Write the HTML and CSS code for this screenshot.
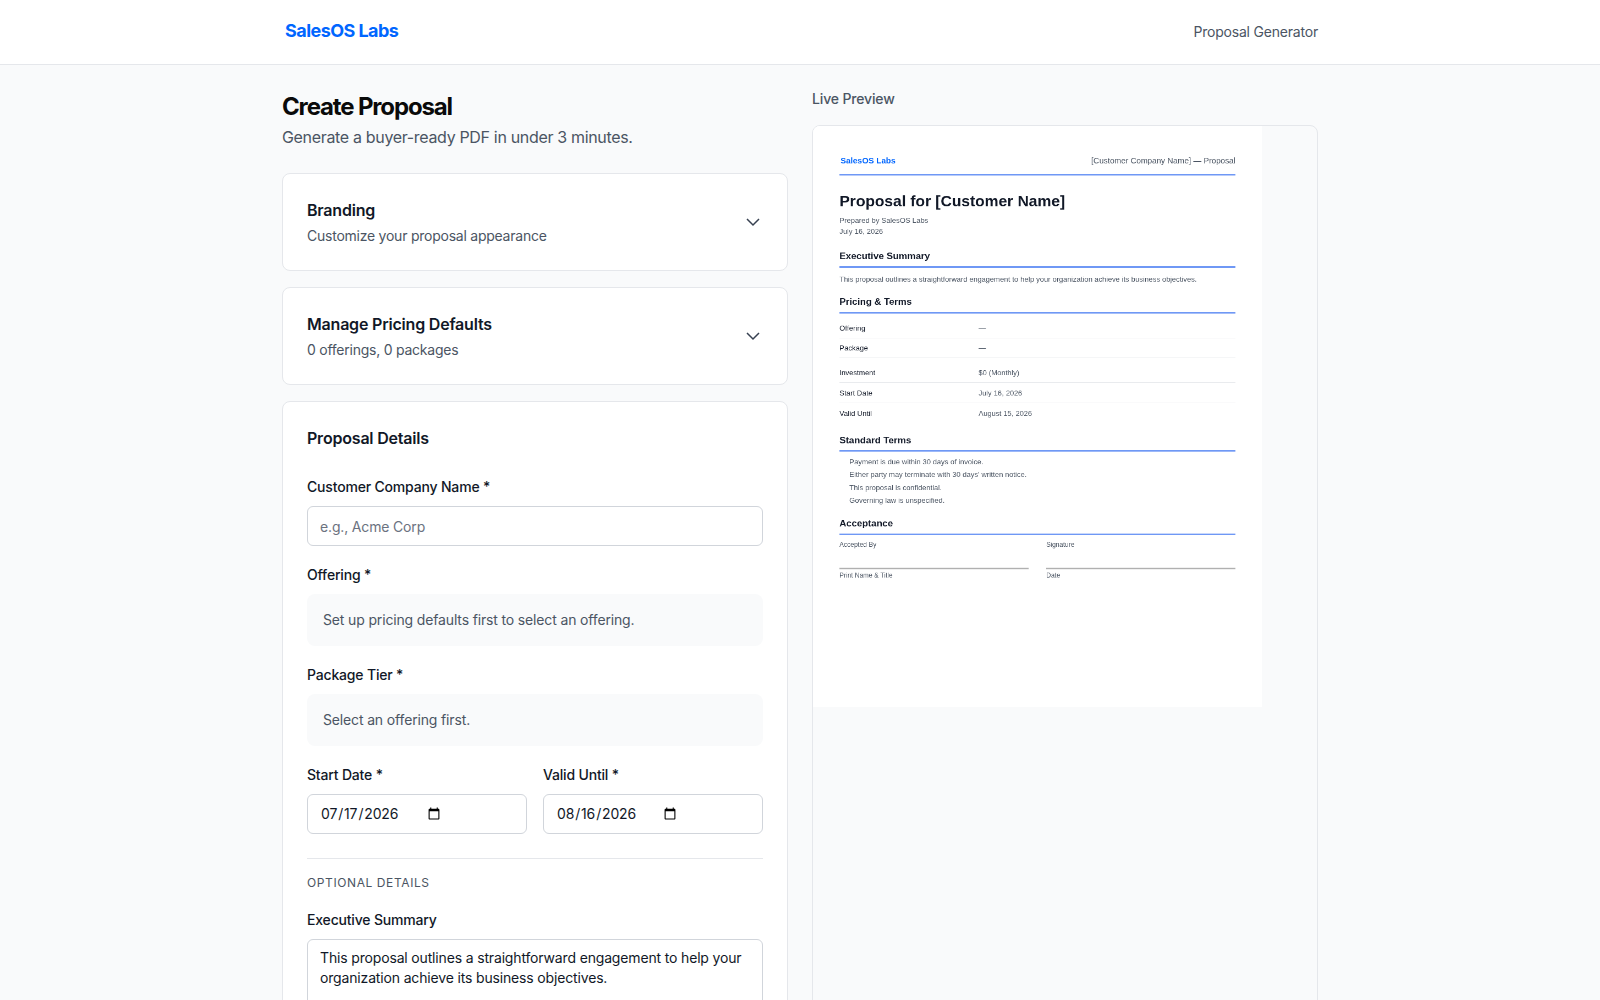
FILE: index.html
```html
<!DOCTYPE html>
<html>
<head>
    <title>Create Proposal - SalesOS Labs</title>
    <link rel="stylesheet" href="styles.css">
</head>
<body>
    <header class="topbar">
        <div class="topbar-inner">
            <span class="brand">SalesOS Labs</span>
            <span class="nav-link">Proposal Generator</span>
        </div>
    </header>

    <main class="layout">
        <section class="form-col">
            <h1 class="page-title">Create Proposal</h1>
            <p class="page-sub">Generate a buyer-ready PDF in under 3 minutes.</p>

            <div class="card collapse-card">
                <div>
                    <div class="card-title">Branding</div>
                    <div class="card-sub">Customize your proposal appearance</div>
                </div>
                <svg class="chevron" width="24" height="24" viewBox="0 0 24 24"><path d="m6 9 6 6 6-6"/></svg>
            </div>

            <div class="card collapse-card">
                <div>
                    <div class="card-title">Manage Pricing Defaults</div>
                    <div class="card-sub">0 offerings, 0 packages</div>
                </div>
                <svg class="chevron" width="24" height="24" viewBox="0 0 24 24"><path d="m6 9 6 6 6-6"/></svg>
            </div>

            <div class="card details-card">
                <h2 class="card-title details-title">Proposal Details</h2>

                <div class="field">
                    <label class="field-label">Customer Company Name *</label>
                    <input class="input" type="text" placeholder="e.g., Acme Corp">
                </div>
                <div class="field">
                    <label class="field-label">Offering *</label>
                    <div class="notice">Set up pricing defaults first to select an offering.</div>
                </div>
                <div class="field">
                    <label class="field-label">Package Tier *</label>
                    <div class="notice">Select an offering first.</div>
                </div>
                <div class="field-row">
                    <div>
                        <label class="field-label">Start Date *</label>
                        <input class="input date-input" type="date" value="2026-07-17">
                    </div>
                    <div>
                        <label class="field-label">Valid Until *</label>
                        <input class="input date-input" type="date" value="2026-08-16">
                    </div>
                </div>

                <div class="optional-head">Optional Details</div>
                <div class="field">
                    <label class="field-label">Executive Summary</label>
                    <textarea class="input summary" rows="4">This proposal outlines a straightforward engagement to help your organization achieve its business objectives.</textarea>
                </div>
            </div>
        </section>

        <section class="preview-col">
            <div class="preview-label">Live Preview</div>
            <div class="preview-panel">
                <div class="sheet-frame">
                    <div class="sheet">
                        <div class="sheet-head">
                            <span class="sheet-brand">SalesOS Labs</span>
                            <span class="sheet-ref">[Customer Company Name] — Proposal</span>
                        </div>
                        <h1 class="sheet-title">Proposal for [Customer Name]</h1>
                        <div class="sheet-meta">Prepared by SalesOS Labs</div>
                        <div class="sheet-meta last-meta">July 16, 2026</div>

                        <h2 class="sheet-h2">Executive Summary</h2>
                        <p class="sheet-text">This proposal outlines a straightforward engagement to help your organization achieve its business objectives.</p>

                        <h2 class="sheet-h2">Pricing &amp; Terms</h2>
                        <table class="sheet-table">
                            <tr><th>Offering</th><td>—</td></tr>
                            <tr><th>Package</th><td>—</td></tr>
                        </table>
                        <table class="sheet-table second">
                            <tr><th>Investment</th><td>$0 (Monthly)</td></tr>
                            <tr><th>Start Date</th><td>July 16, 2026</td></tr>
                            <tr class="last"><th>Valid Until</th><td>August 15, 2026</td></tr>
                        </table>

                        <h2 class="sheet-h2 terms-head">Standard Terms</h2>
                        <ul class="sheet-terms">
                            <li>Payment is due within 30 days of invoice.</li>
                            <li>Either party may terminate with 30 days' written notice.</li>
                            <li>This proposal is confidential.</li>
                            <li>Governing law is unspecified.</li>
                        </ul>

                        <h2 class="sheet-h2">Acceptance</h2>
                        <div class="sign-grid">
                            <div>
                                <div class="sign-label">Accepted By</div>
                                <div class="sign-line"></div>
                                <div class="sign-label">Print Name &amp; Title</div>
                            </div>
                            <div>
                                <div class="sign-label">Signature</div>
                                <div class="sign-line"></div>
                                <div class="sign-label">Date</div>
                            </div>
                        </div>
                    </div>
                </div>
            </div>
        </section>
    </main>
</body>
</html>
```

FILE: styles.css
```css
* { box-sizing: border-box; }
body { margin: 0; background: #f9fafb; color: #111827; font-family: Inter, sans-serif; font-size: 16px; }

.topbar { background: white; border-bottom: 1px solid #e5e7eb; height: 65px; }
.topbar-inner { max-width: 1100px; margin: 0 auto; padding: 0 32px 2px 35px; height: 64px; display: flex; justify-content: space-between; align-items: center; }
.brand { font-size: 18px; font-weight: 700; letter-spacing: -0.55px; color: #0066ff; margin-bottom: 1px; }
.nav-link { font-size: 14px; letter-spacing: -0.2px; color: #4b5563; }

.layout { max-width: 1100px; margin: 0 auto; padding: 24px 32px; display: grid; grid-template-columns: minmax(0, 1fr) minmax(0, 1fr); gap: 24px; }

.page-title { font-size: 24px; line-height: 32px; font-weight: 700; letter-spacing: -1.15px; margin: 2px 0 2px; color: #0a0a0a; }
.page-sub { font-size: 16px; line-height: 24px; letter-spacing: -0.33px; color: #4b5563; margin: 0 0 24px; }

.card { background: white; border: 1px solid #e5e7eb; border-radius: 8px; padding: 24px; margin-bottom: 16px; }
.collapse-card { display: flex; justify-content: space-between; align-items: center; }
.card-title { font-size: 16px; line-height: 24px; font-weight: 600; letter-spacing: -0.2px; color: #111827; margin: 0 0 4px; }
.card-sub { font-size: 14px; line-height: 20px; letter-spacing: -0.24px; color: #4b5563; }
.chevron { fill: none; stroke: #374151; stroke-width: 1.5; margin-right: -2px; }

.details-title { margin-bottom: 27px; }
.field { margin-bottom: 19px; min-width: 0; }
.field-label { display: block; font-size: 14px; line-height: 20px; font-weight: 500; letter-spacing: -0.18px; color: #111827; margin-bottom: 9px; }
.input { display: block; width: 100%; height: 40px; padding: 8px 12px; border: 1px solid #d1d5db; border-radius: 6px; background: white; color: #111827; font-family: Inter, sans-serif; font-size: 14px; line-height: 20px; letter-spacing: -0.16px; }
.input::placeholder { color: #6b7280; }
.date-input::-webkit-calendar-picker-indicator { margin-right: 71px; }
.notice { background: #f9fafb; border-radius: 8px; padding: 16px; font-size: 14px; line-height: 20px; letter-spacing: -0.15px; color: #4b5563; height: 52px; }
.field-row { display: grid; grid-template-columns: minmax(0, 1fr) minmax(0, 1fr); gap: 16px; }
.optional-head { border-top: 1px solid #e5e7eb; margin-top: 24px; padding-top: 16px; margin-bottom: 19px; font-size: 12px; line-height: 16px; font-weight: 400; letter-spacing: 0.6px; text-transform: uppercase; color: #4b5563; }
.summary { height: 120px; resize: vertical; }

.preview-label { font-size: 14px; line-height: 20px; font-weight: 500; letter-spacing: -0.15px; color: #4b5563; margin: 0 0 16px; }
.preview-panel { border: 1px solid #e5e7eb; border-radius: 8px; overflow: hidden; height: calc(100% - 36px); }
.sheet-frame { width: 449px; height: 581px; background: white; overflow: hidden; }
.sheet { width: 816px; height: 1056px; padding: 48px; background: white; transform: scale(0.55); transform-origin: top left; will-change: transform; font-family: "Liberation Sans", Arial, sans-serif; color: #4b5563; font-size: 10pt; }

.sheet-head { display: flex; justify-content: space-between; align-items: center; border-bottom: 3px solid #6f98f5; padding: 6px 0 16px 2px; margin-bottom: 29px; }
.sheet-brand { font-size: 15px; font-weight: 700; color: #0066ff; }
.sheet-ref { font-size: 11pt; color: #4b5563; }
.sheet-title { font-size: 28.3px; line-height: 34px; font-weight: 700; color: #111827; margin: 0 0 9px; }
.sheet-meta { font-size: 10pt; line-height: 20px; color: #4b5563; }
.last-meta { padding-bottom: 2px; }
.sheet-h2 { font-size: 13pt; line-height: 22px; font-weight: 700; color: #111827; border-bottom: 3px solid #6f98f5; padding-bottom: 8px; margin: 21px 0 9px; }
.sheet-text { font-size: 10pt; line-height: 20px; padding-top: 2px; margin: 0 0 -2px; }
.sheet-table { width: 100%; border-collapse: collapse; font-size: 10pt; }
.sheet-table th { width: 253px; text-align: left; font-weight: 400; color: #111827; padding: 10px 0; line-height: 15px; border-bottom: 1px solid #e5e7eb; }
.sheet-table td { padding: 10px 0; line-height: 15px; border-bottom: 1px solid #e5e7eb; }
.sheet-table.second { margin-top: 8px; }
.sheet-table.second th, .sheet-table.second td { padding: 10.5px 0; }
.sheet-table .last th, .sheet-table .last td { border-bottom: none; }
.terms-head { margin-top: 20px; margin-bottom: 7px; padding-bottom: 7px; }
.sheet-terms { list-style: none; margin: 0 0 -3px; padding: 0 0 0 18px; font-size: 10pt; line-height: 23.4px; }
.sign-grid { display: grid; grid-template-columns: 1fr 1fr; gap: 32px; margin-top: 6px; }
.sign-label { font-size: 9pt; line-height: 16px; color: #4b5563; }
.sign-line { border-bottom: 3px solid #b0b0b0; height: 37px; margin-bottom: 3px; }
```
